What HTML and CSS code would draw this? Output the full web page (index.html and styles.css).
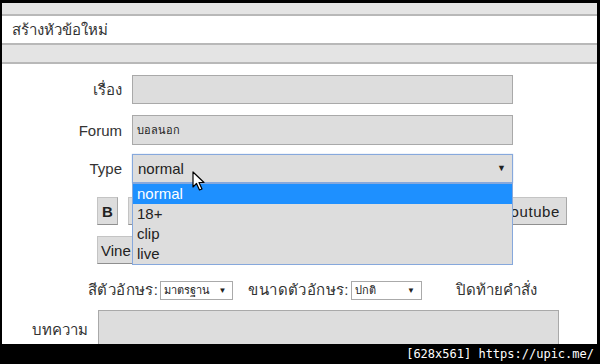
FILE: index.html
```html
<!DOCTYPE html>
<html lang="th">
<head>
    <meta charset="UTF-8">
    <title>สร้างหัวข้อใหม่</title>
    <link rel="stylesheet" href="styles.css">
</head>
<body>

    <div class="screen">
        <div class="topbar"></div>
        <div class="title">สร้างหัวข้อใหม่</div>
        <div class="subbar"></div>

        <div class="form">
            <div class="row first">
                <label class="label">เรื่อง</label>
                <div class="field"></div>
            </div>
            <div class="row second">
                <label class="label">Forum</label>
                <div class="field small-text">บอลนอก</div>
            </div>
            <div class="row">
                <label class="label">Type</label>
                <div class="field select focus">
                    <span>normal</span>
                    <span class="arrow">▼</span>
                    <ul class="dropdown">
                        <li class="picked">normal</li>
                        <li>18+</li>
                        <li>clip</li>
                        <li>live</li>
                    </ul>
                    <svg class="cursor" width="14" height="21" viewBox="0 0 14 21">
                        <path d="M1 1 L1 16 L4.5 12.5 L7.5 19 L10 18 L7 11.5 L12 11.5 Z" fill="#fff" stroke="#000" stroke-width="1.2" stroke-linejoin="round"/>
                    </svg>
                </div>
            </div>

            <div class="tools">
                <button class="btn bold">B</button>
                <button class="btn blank"></button>
                <button class="btn youtube">Youtube</button>
            </div>
            <div class="tools">
                <button class="btn vine">Vine</button>
            </div>

            <div class="fonts">
                <span class="thai">สีตัวอักษร:</span>
                <span class="mini-select color-select">มาตรฐาน <i>▼</i></span>
                <span class="thai gap">ขนาดตัวอักษร:</span>
                <span class="mini-select size-select">ปกติ <i>▼</i></span>
                <span class="closing">ปิดท้ายคำสั่ง</span>
            </div>

            <div class="article">
                <label class="article-label">บทความ</label>
                <div class="textarea"></div>
            </div>
        </div>
    </div>

    <div class="stamp">[628x561] https://upic.me/</div>

</body>
</html>
```

FILE: styles.css
```css
body {
    margin: 0;
    padding: 3px 0 0 0;
    background-color: #000;
    font-family: "Liberation Sans", "DejaVu Sans", sans-serif;
    color: #333;
    width: 600px;
    height: 364px;
    overflow: hidden;
}

.screen {
    margin-left: 2px;
    width: 595px;
    height: 341px;
    background-color: #fff;
    overflow: hidden;
}

.topbar {
    height: 11px;
    background-color: #e4e4e4;
    border-bottom: 2px solid #b8b8b8;
}

.title {
    height: 27px;
    line-height: 28px;
    padding-left: 10px;
    font-size: 15px;
    color: #333;
    border-bottom: 2px solid #b8b8b8;
}

.subbar {
    height: 17px;
    background-color: #e4e4e4;
    border-bottom: 2px solid #b8b8b8;
}

.form {
    padding-top: 11px;
}

.row {
    display: flex;
    align-items: center;
    gap: 10px;
    margin-bottom: 9px;
}

.row.first {
    margin-bottom: 11px;
}

.label {
    width: 120px;
    text-align: right;
    font-size: 15px;
    color: #333;
}

.field {
    position: relative;
    box-sizing: border-box;
    width: 381px;
    height: 29px;
    background-color: #ddd;
    border: 1px solid #a9a9a9;
    display: flex;
    align-items: center;
    padding-left: 4px;
}

.second .field {
    height: 30px;
}

.small-text {
    font-size: 11px;
    color: #222;
}

.select {
    font-size: 15px;
    color: #222;
    padding-left: 5px;
}

.focus {
    border-color: #86a8dc;
    box-shadow: 0 0 1px #9fbbe8;
}

.arrow {
    position: absolute;
    right: 6px;
    top: 8px;
    font-size: 9px;
    color: #222;
}

.dropdown {
    position: absolute;
    top: 28px;
    left: -1px;
    width: 381px;
    margin: 0;
    padding: 0;
    list-style: none;
    background-color: #ddd;
    border: 1px solid #86a8dc;
    box-sizing: border-box;
    z-index: 5;
}

.dropdown li {
    height: 20px;
    line-height: 19px;
    padding-left: 4px;
    font-size: 15px;
    color: #222;
}

.dropdown li.picked {
    background-color: #1e90ff;
    color: #fff;
}

.cursor {
    position: absolute;
    left: 59px;
    top: 16px;
    z-index: 6;
}

.tools {
    display: flex;
    gap: 10px;
    padding-left: 95px;
    margin-top: 14px;
}

.tools + .tools {
    margin-top: 11px;
}

.btn {
    height: 28px;
    padding: 0 3px;
    font-family: "Liberation Sans", sans-serif;
    font-size: 15px;
    color: #222;
    background-color: #ddd;
    border: 1px solid #c4c4c4;
    border-bottom-color: #8f8f8f;
    border-right-color: #a8a8a8;
}

.bold {
    width: 21px;
    font-weight: bold;
}

.blank {
    width: 30px;
}

.youtube {
    margin-left: auto;
    margin-right: 30px;
    padding: 0 6px 0 8px;
    letter-spacing: 0.6px;
}

.vine {
    width: 50px;
    text-align: left;
}

.fonts {
    display: flex;
    align-items: center;
    padding-left: 86px;
    margin-top: 16px;
    height: 20px;
    font-size: 15px;
    color: #333;
}

.thai {
    letter-spacing: 0.4px;
}

.mini-select {
    display: flex;
    justify-content: space-between;
    align-items: center;
    box-sizing: border-box;
    height: 19px;
    margin-left: 2px;
    padding: 0 6px 0 3px;
    border: 1px solid #aaa;
    font-size: 11px;
    color: #222;
}

.mini-select i {
    font-style: normal;
    font-size: 8px;
}

.color-select {
    width: 73px;
}

.size-select {
    width: 71px;
}

.gap {
    margin-left: 15px;
}

.closing {
    margin-left: 34px;
}

.article {
    display: flex;
    gap: 10px;
    margin-top: 10px;
}

.article-label {
    width: 86px;
    text-align: right;
    padding-top: 8px;
    font-size: 15px;
    color: #333;
}

.textarea {
    width: 459px;
    height: 60px;
    background-color: #ddd;
    border: 1px solid #a9a9a9;
}

.stamp {
    height: 20px;
    padding-right: 6px;
    text-align: right;
    font-family: "DejaVu Sans Mono", monospace;
    font-size: 12px;
    line-height: 20px;
    color: #fff;
}
```
